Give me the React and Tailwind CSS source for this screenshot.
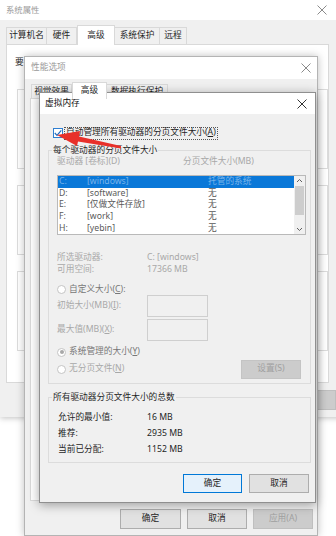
import React from "react";

const font = "font-['Noto_Sans','Noto_Sans_CJK_SC',sans-serif]";

const drives = [
  ["C:", "[windows]", "托管的系统"],
  ["D:", "[software]", "无"],
  ["E:", "[仅做文件存放]", "无"],
  ["F:", "[work]", "无"],
  ["H:", "[yebin]", "无"],
];

const CloseX = ({ color = "#6b6b6b" }) => (
  <svg width="10" height="10" viewBox="0 0 10 10">
    <path d="M0.5 0.5 L9.5 9.5 M9.5 0.5 L0.5 9.5" stroke={color} strokeWidth="1" />
  </svg>
);

const Btn = ({ children, className = "" }) => (
  <div
    className={`flex items-center justify-center h-[19px] border ${className}`}
  >
    {children}
  </div>
);

const Radio = ({ checked }) => (
  <div className="w-[9px] h-[9px] rounded-full border border-[#c4c4c4] bg-white flex items-center justify-center">
    {checked && <div className="w-[4px] h-[4px] rounded-full bg-[#a8a8a8]" />}
  </div>
);

const Group = ({ label, className = "", children }) => (
  <div className={`relative border border-[#dcdcdc] ${className}`}>
    <div className="absolute -top-[7px] left-[3px] px-[1px] bg-[#f0f0f0] text-[#1f1f1f] leading-[12px]">
      {label}
    </div>
    {children}
  </div>
);

export default function App() {
  return (
    <div
      className={`relative w-[336px] h-[536px] overflow-hidden bg-white text-[8.7px] ${font}`}
    >
      {/* 系统属性 (mostly covered) */}
      <div className="absolute left-0 top-0 w-[345px] h-[417px] bg-[#f0f0f0] shadow-[0_1px_6px_rgba(0,0,0,0.25)]">
        <div className="h-[20px] bg-white flex items-center justify-between">
          <span className="pl-[6px] text-[#9a9a9a] text-[8.4px]">系统属性</span>
          <div className="w-[46px] flex justify-center">
            <CloseX color="#8a8a8a" />
          </div>
        </div>
        <div className="flex items-end h-[24px] pl-[6px] text-[#1f1f1f]">
          <div className="w-[41px] h-[17px] flex items-center justify-center bg-[#f0f0f0] border border-[#d9d9d9] border-b-0">计算机名</div>
          <div className="w-[30px] h-[17px] flex items-center justify-center bg-[#f0f0f0] border border-[#d9d9d9] border-b-0 border-l-0">硬件</div>
          <div className="relative z-10 w-[38px] h-[20px] -mb-px flex items-center justify-center bg-white border border-[#d9d9d9] border-b-0">高级</div>
          <div className="w-[45px] h-[17px] flex items-center justify-center bg-[#f0f0f0] border border-[#d9d9d9] border-b-0 border-l-0">系统保护</div>
          <div className="w-[27px] h-[17px] flex items-center justify-center bg-[#f0f0f0] border border-[#d9d9d9] border-b-0 border-l-0">远程</div>
        </div>
        <div className="ml-[6px] w-[323px] h-[339px] bg-white border border-[#d9d9d9] pt-[10px] pl-[8px] text-[#1f1f1f]">
          <div className="leading-[14px]">要</div>
          <div className="mt-[20px] ml-[2px] h-[80px] border border-[#dcdcdc]" />
          <div className="mt-[16px] ml-[2px] h-[70px] border border-[#dcdcdc]" />
          <div className="mt-[16px] ml-[2px] h-[80px] border border-[#dcdcdc]" />
        </div>
        <div className="mt-[7px] flex justify-end gap-[7px] pr-[9px]">
          <Btn className="w-[66px] h-[20px] bg-[#e1e1e1] border-[#adadad]" />
          <Btn className="w-[66px] h-[20px] bg-[#e1e1e1] border-[#adadad]" />
          <Btn className="w-[66px] h-[20px] bg-[#cccccc] border-[#bfbfbf]" />
        </div>
      </div>

      {/* 性能选项 */}
      <div className="absolute left-[24px] top-[56px] w-[294px] h-[480px] bg-[#f0f0f0] border border-[#b4b4b4] shadow-[0_0_8px_rgba(0,0,0,0.25)]">
        <div className="h-[22px] bg-white flex items-center justify-between">
          <span className="pl-[6px] text-[#9a9a9a]">性能选项</span>
          <div className="pr-[6px]">
            <CloseX color="#8a8a8a" />
          </div>
        </div>
        <div className="flex items-end h-[19px] pl-[6px] text-[#1f1f1f]">
          <div className="w-[41px] h-[14px] flex items-start justify-center bg-[#f0f0f0] border border-[#d9d9d9] border-b-0">视觉效果</div>
          <div className="relative z-10 w-[35px] h-[17px] -mb-px flex items-start pt-[1px] justify-center bg-white border border-[#d9d9d9] border-b-0">高级</div>
          <div className="w-[61px] h-[14px] flex items-start justify-center bg-[#f0f0f0] border border-[#d9d9d9] border-b-0 border-l-0">数据执行保护</div>
        </div>
        <div className="ml-[5px] w-[283px] h-[403px] bg-white border border-[#d9d9d9]" />
        <div className="mt-[8px] flex justify-end gap-[6px] pr-[4px] text-[#1f1f1f]">
          <Btn className="w-[61px] h-[20px] bg-[#e1e1e1] border-[#adadad]">确定</Btn>
          <Btn className="w-[60px] h-[20px] bg-[#e1e1e1] border-[#adadad]">取消</Btn>
          <Btn className="w-[60px] h-[20px] bg-[#cccccc] border-[#bfbfbf] text-[#a0a0a0]">应用(A)</Btn>
        </div>
      </div>

      {/* 虚拟内存 */}
      <div className="absolute left-[39px] top-[92px] w-[277px] h-[411px] bg-[#f0f0f0] border border-[#8f8f8f] shadow-[0_2px_10px_rgba(0,0,0,0.35)] text-[#1f1f1f]">
        <div className="h-[21px] bg-white flex items-center justify-between">
          <span className="pl-[5px] text-[#111]">虚拟内存</span>
          <div className="pr-[8px]">
            <CloseX color="#333" />
          </div>
        </div>

        <div className="mt-[12px] h-[14px] flex items-center pl-[13px]">
          <svg width="10" height="10" viewBox="0 0 10 10">
            <rect x="0.5" y="0.5" width="9" height="9" fill="white" stroke="#2f7fd1" />
            <path d="M1.8 5 L4 7.3 L8.3 2.3" fill="none" stroke="#1d6cc0" strokeWidth="1.2" />
          </svg>
          <div className="ml-[1px] h-[13px] px-[1px] flex items-center border border-dotted border-[#555]">
            自动管理所有驱动器的分页文件大小(<span className="underline">A</span>)
          </div>
        </div>

        <Group label="每个驱动器的分页文件大小" className="mt-[10px] ml-[8px] w-[263px] h-[234px] pl-[8px] pt-[6px]">
          <div className="h-[10px] flex items-center text-[#a8a8a8]">
            <span className="w-[126px]">驱动器 [卷标](D)</span>
            <span>分页文件大小(MB)</span>
          </div>
          <div className="mt-[8px] w-[249px] h-[60px] bg-white border border-[#b9b9b9] flex">
            <div className="flex-1">
              {drives.map(([d, l, s], i) => (
                <div
                  key={d}
                  className={`h-[11.6px] flex items-center pl-[1px] ${
                    i === 0 ? "bg-[#0a78d8] text-[#79b4ea]" : "text-[#5a5a5a]"
                  }`}
                >
                  <span className="w-[28px]">{d}</span>
                  <span className="w-[121px]">{l}</span>
                  <span>{s}</span>
                </div>
              ))}
            </div>
            <div className="w-[11px] bg-[#f0f0f0] flex flex-col items-center">
              <svg width="11" height="10" viewBox="0 0 11 10">
                <path d="M3 6 L5.5 3.5 L8 6" fill="none" stroke="#606060" strokeWidth="1" />
              </svg>
              <div className="w-[9px] h-[29px] bg-[#cdcdcd]" />
              <div className="flex-1" />
              <svg width="11" height="10" viewBox="0 0 11 10">
                <path d="M3 4 L5.5 6.5 L8 4" fill="none" stroke="#606060" strokeWidth="1" />
              </svg>
            </div>
          </div>

          <div className="mt-[17px] h-[12px] flex items-center text-[#a8a8a8]">
            <span className="w-[90px]">所选驱动器:</span>
            <span>C: [windows]</span>
          </div>
          <div className="h-[12px] flex items-center text-[#a8a8a8]">
            <span className="w-[90px]">可用空间:</span>
            <span>17366 MB</span>
          </div>

          <div className="mt-[8px] h-[11px] flex items-center text-[#777]">
            <Radio />
            <span className="ml-[3px]">
              自定义大小(<span className="underline">C</span>):
            </span>
          </div>
          <div className="h-[22px] flex items-center text-[#a8a8a8]">
            <span className="w-[90px]">
              初始大小(MB)(<span className="underline">I</span>):
            </span>
            <div className="w-[61px] h-[22px] bg-[#f0f0f0] border border-[#cfcfcf]" />
          </div>
          <div className="mt-[2px] h-[22px] flex items-center text-[#a8a8a8]">
            <span className="w-[90px]">
              最大值(MB)(<span className="underline">X</span>):
            </span>
            <div className="w-[61px] h-[22px] bg-[#f0f0f0] border border-[#cfcfcf]" />
          </div>

          <div className="mt-[5px] h-[12px] flex items-center text-[#777]">
            <Radio checked />
            <span className="ml-[3px]">
              系统管理的大小(<span className="underline">Y</span>)
            </span>
          </div>
          <div className="h-[22px] flex items-center text-[#a8a8a8] pr-[9px]">
            <Radio />
            <span className="ml-[3px] flex-1">
              无分页文件(<span className="underline">N</span>)
            </span>
            <Btn className="w-[60px] bg-[#cccccc] border-[#c4c4c4] text-[#a0a0a0]">
              设置(S)
            </Btn>
          </div>
        </Group>

        <Group label="所有驱动器分页文件大小的总数" className="mt-[13px] ml-[8px] w-[263px] h-[66px] pl-[9px] pt-[12px]">
          <div className="h-[16px] flex items-center">
            <span className="w-[89px]">允许的最小值:</span>
            <span>16 MB</span>
          </div>
          <div className="h-[16px] flex items-center">
            <span className="w-[89px]">推荐:</span>
            <span>2935 MB</span>
          </div>
          <div className="h-[16px] flex items-center">
            <span className="w-[89px]">当前已分配:</span>
            <span>1152 MB</span>
          </div>
        </Group>

        <div className="mt-[11px] flex justify-end gap-[7px] pr-[6px]">
          <Btn className="w-[59px] bg-[#e5f1fb] border-[#0078d7]">确定</Btn>
          <Btn className="w-[60px] bg-[#e1e1e1] border-[#adadad]">取消</Btn>
        </div>
      </div>

      {/* red annotation arrow */}
      <svg className="absolute left-0 top-0" width="336" height="536" viewBox="0 0 336 536">
        <polygon
          points="57,135 80,131 79,136.5 121,146 121,148.5 78,141.5 77,146"
          fill="#e8302a"
        />
      </svg>
    </div>
  );
}
